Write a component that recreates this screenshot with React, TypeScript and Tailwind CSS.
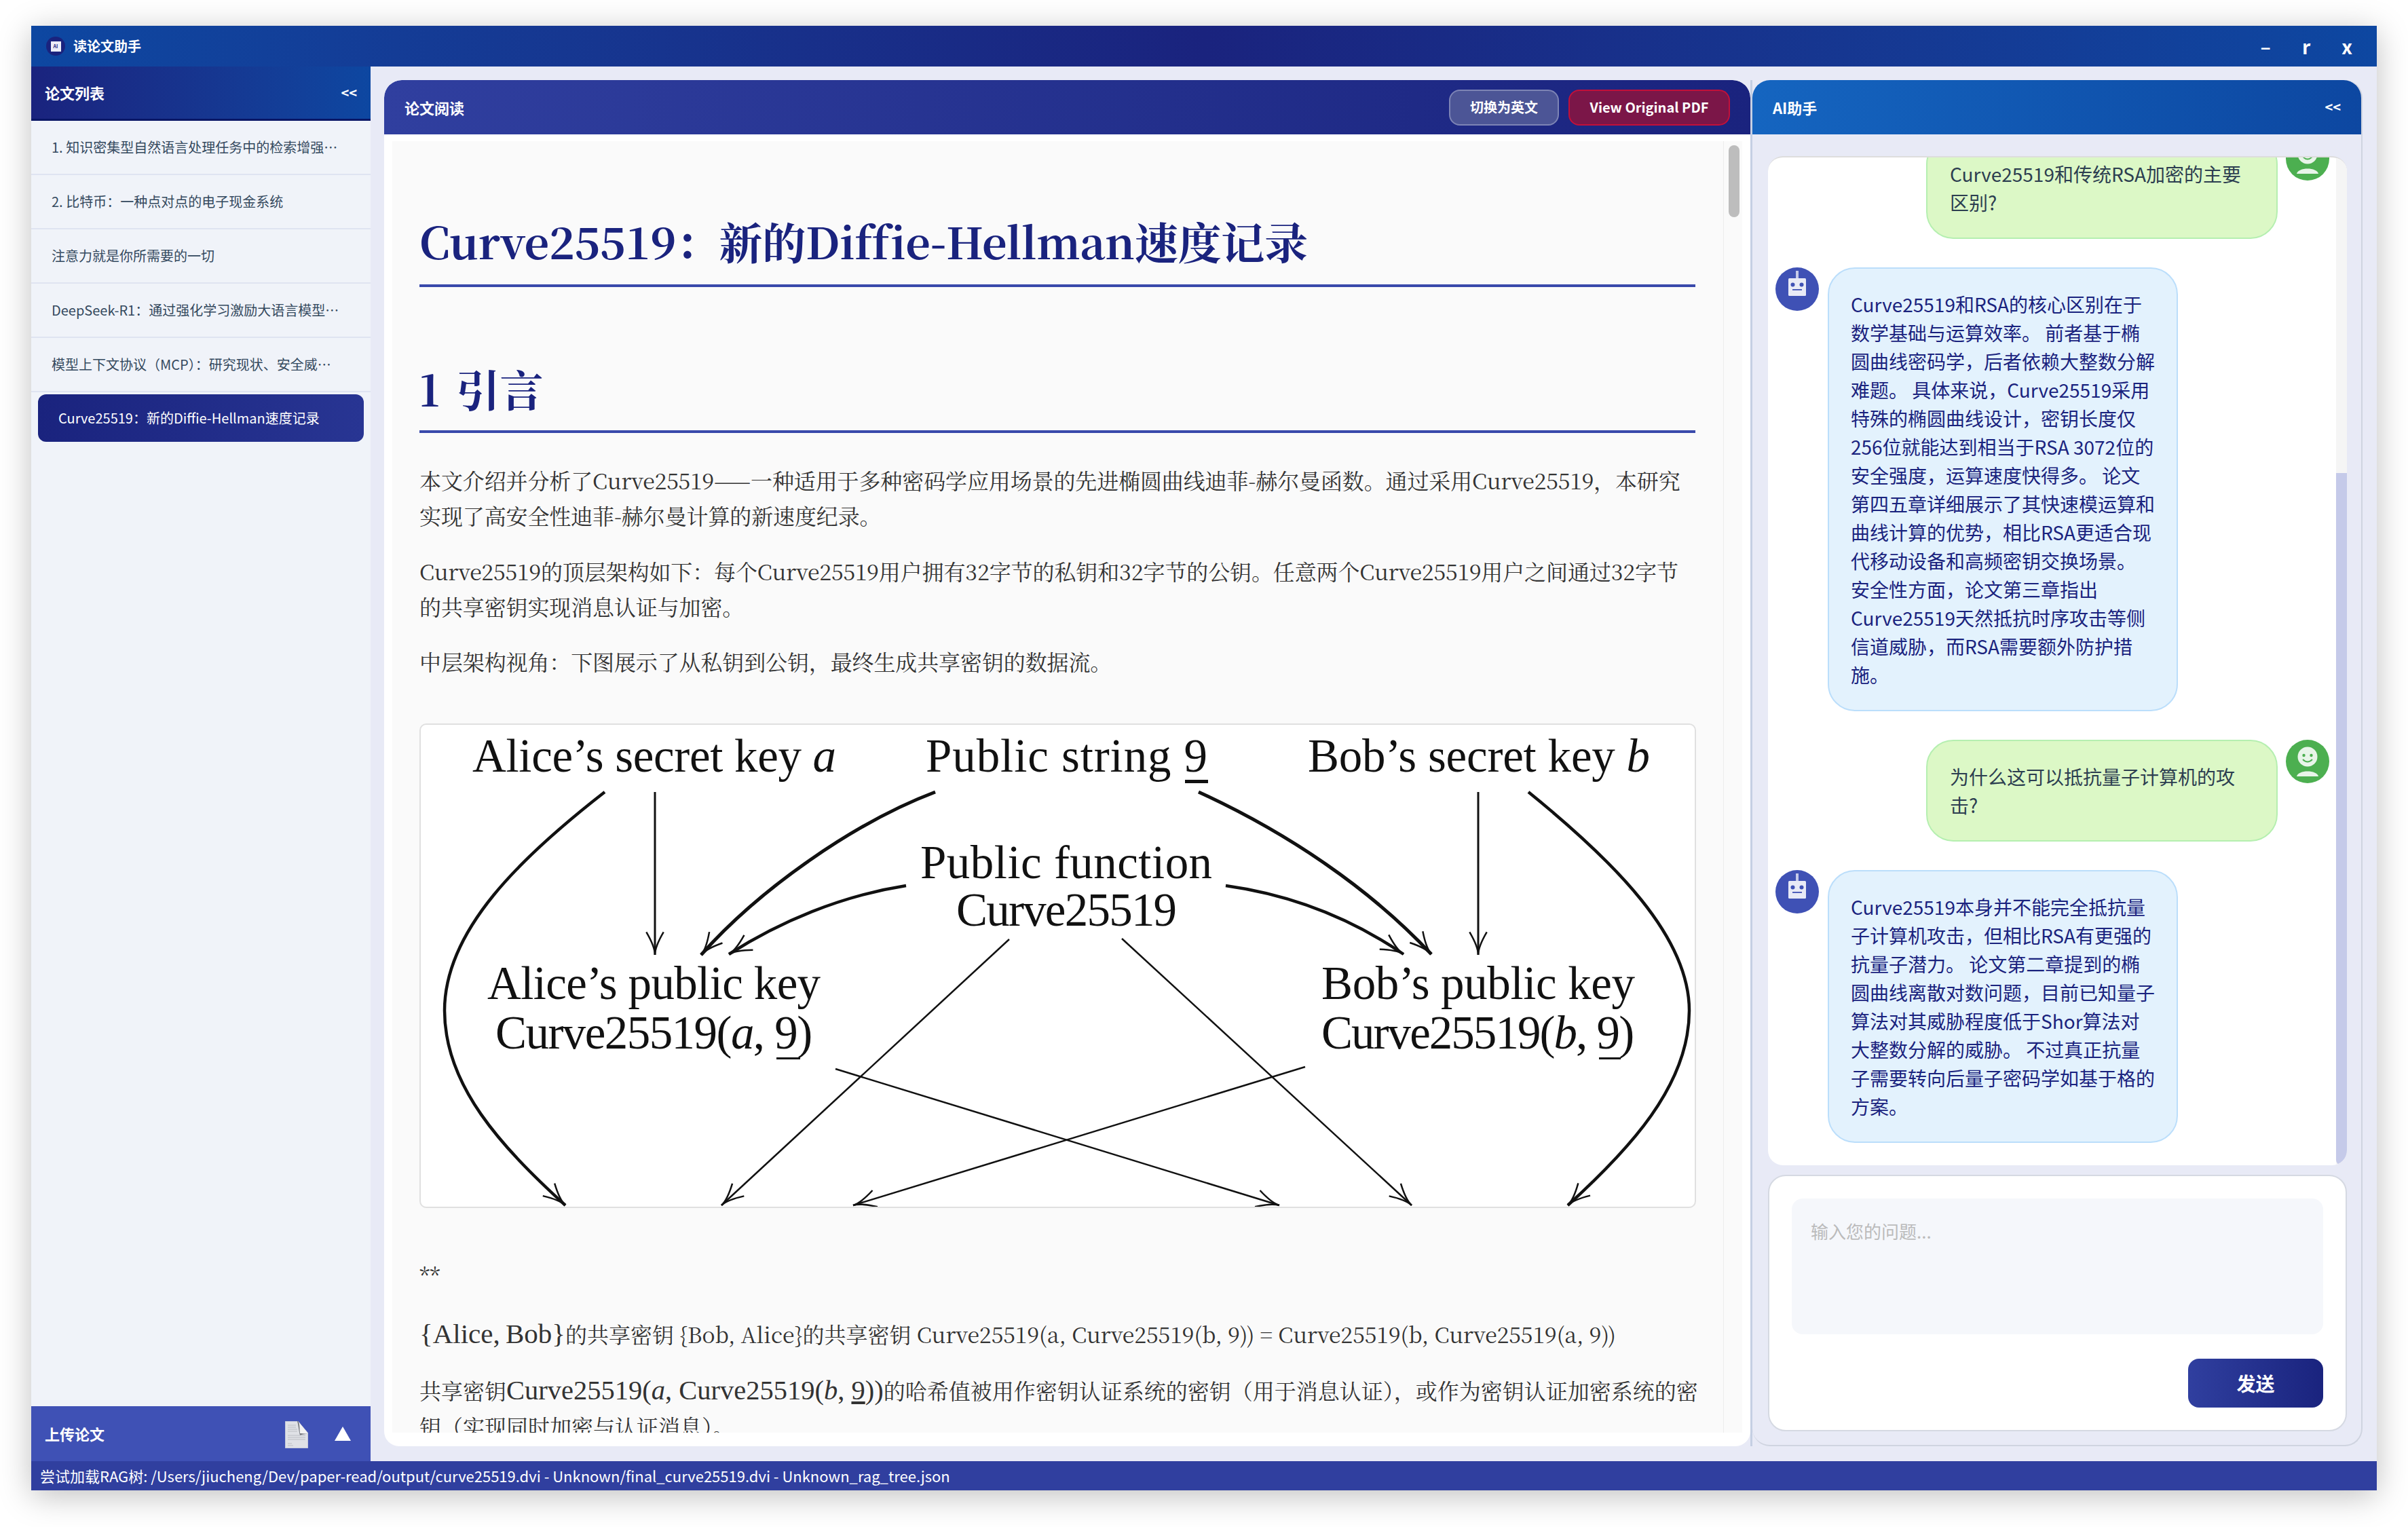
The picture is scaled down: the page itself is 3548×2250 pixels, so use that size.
import React from "react";

const papers = [
  "1. 知识密集型自然语言处理任务中的检索增强…",
  "2. 比特币：一种点对点的电子现金系统",
  "注意力就是你所需要的一切",
  "DeepSeek-R1：通过强化学习激励大语言模型…",
  "模型上下文协议（MCP）：研究现状、安全威…",
];

const answerOne = [
  "Curve25519和RSA的核心区别在于",
  "数学基础与运算效率。 前者基于椭",
  "圆曲线密码学，后者依赖大整数分解",
  "难题。 具体来说，Curve25519采用",
  "特殊的椭圆曲线设计，密钥长度仅",
  "256位就能达到相当于RSA 3072位的",
  "安全强度，运算速度快得多。 论文",
  "第四五章详细展示了其快速模运算和",
  "曲线计算的优势，相比RSA更适合现",
  "代移动设备和高频密钥交换场景。",
  "安全性方面，论文第三章指出",
  "Curve25519天然抵抗时序攻击等侧",
  "信道威胁，而RSA需要额外防护措",
  "施。",
];

const answerTwo = [
  "Curve25519本身并不能完全抵抗量",
  "子计算机攻击，但相比RSA有更强的",
  "抗量子潜力。 论文第二章提到的椭",
  "圆曲线离散对数问题，目前已知量子",
  "算法对其威胁程度低于Shor算法对",
  "大整数分解的威胁。 不过真正抗量",
  "子需要转向后量子密码学如基于格的",
  "方案。",
];

const sans = "font-['Noto_Sans_CJK_SC','Noto_Sans',sans-serif]";
const serif = "font-['Noto_Serif_CJK_SC','Liberation_Serif','Noto_Sans_CJK_SC',serif]";
const math = "font-['Liberation_Serif',serif]";

// open arrow head, tip at (x, y), coming from (fx, fy)
const head = (x: number, y: number, fx: number, fy: number, len = 36, spread = 0.36) => {
  const a = Math.atan2(fy - y, fx - x);
  const p1 = [x + len * Math.cos(a + spread), y + len * Math.sin(a + spread)];
  const p2 = [x + len * Math.cos(a - spread), y + len * Math.sin(a - spread)];
  return `M${p1[0]} ${p1[1]} Q${x + 12 * Math.cos(a)} ${y + 12 * Math.sin(a)} ${x} ${y} Q${x + 12 * Math.cos(a)} ${y + 12 * Math.sin(a)} ${p2[0]} ${p2[1]}`;
};

const Lines = ({ lines }: { lines: string[] }) => (
  <>
    {lines.map((l) => (
      <div key={l} className="whitespace-nowrap">
        {l}
      </div>
    ))}
  </>
);

const DiagramText = ({ x, y, w, children }: { x: number; y: number; w: number; children: React.ReactNode }) => (
  <text x={x} y={y} textLength={w} lengthAdjust="spacing" fontSize="69" fontFamily="'Liberation Serif', serif" fill="#111">
    {children}
  </text>
);

const Diagram = () => {
  const curves: [string, number, [number, number, number, number]][] = [
    ["M892 1167 C770 1262 656 1370 656 1489 C656 1600 740 1690 834 1776", 4.5, [834, 1776, 800, 1744]],
    ["M1379 1167 C1260 1212 1120 1310 1034 1407", 5, [1034, 1407, 1062, 1374]],
    ["M1336 1305 C1240 1320 1150 1358 1075 1406", 4.5, [1075, 1406, 1112, 1384]],
    ["M1767 1167 C1900 1228 2020 1310 2110 1406", 5, [2110, 1406, 2082, 1374]],
    ["M1807 1305 C1900 1318 1990 1352 2069 1406", 4.5, [2069, 1406, 2034, 1384]],
    ["M2253 1167 C2380 1270 2490 1380 2490 1489 C2490 1600 2400 1695 2311 1776", 4.5, [2311, 1776, 2344, 1744]],
    ["M966 1167 L966 1407", 3, [966, 1407, 966, 1370]],
    ["M2179 1167 L2179 1407", 3, [2179, 1407, 2179, 1370]],
    ["M1488 1384 L1064 1776", 2.5, [1064, 1776, 1092, 1750]],
    ["M1232 1575 L1886 1776", 2.5, [1886, 1776, 1850, 1765]],
    ["M1924 1572 L1258 1776", 2.5, [1258, 1776, 1294, 1765]],
    ["M1654 1383 L2081 1776", 2.5, [2081, 1776, 2053, 1750]],
  ];
  return (
    <svg viewBox="621 1068 1877 710" className="block h-full w-full">
      {curves.map(([d, sw, h]) => (
        <g key={d} fill="none" stroke="#111" strokeWidth={sw}>
          <path d={d} />
          <path d={head(h[0], h[1], h[2], h[3])} strokeWidth={2.5} />
        </g>
      ))}
      <DiagramText x={697} y={1137} w={536}>
        Alice’s secret key <tspan fontStyle="italic">a</tspan>
      </DiagramText>
      <DiagramText x={1365} y={1137} w={415}>
        Public string 9
      </DiagramText>
      <DiagramText x={1928} y={1137} w={504}>
        Bob’s secret key <tspan fontStyle="italic">b</tspan>
      </DiagramText>
      <DiagramText x={1357} y={1294} w={430}>
        Public function
      </DiagramText>
      <DiagramText x={1410} y={1364} w={325}>
        Curve25519
      </DiagramText>
      <DiagramText x={719} y={1472} w={491}>
        Alice’s public key
      </DiagramText>
      <DiagramText x={731} y={1545} w={467}>
        Curve25519(<tspan fontStyle="italic">a</tspan>, 9)
      </DiagramText>
      <DiagramText x={1948} y={1472} w={462}>
        Bob’s public key
      </DiagramText>
      <DiagramText x={1948} y={1545} w={461}>
        Curve25519(<tspan fontStyle="italic">b</tspan>, 9)
      </DiagramText>
      <g fill="#111">
        <rect x={1747} y={1149} width={34} height={5} />
        <rect x={1145} y={1558} width={35} height={3} />
        <rect x={2357} y={1558} width={32} height={3} />
      </g>
    </svg>
  );
};

const UserAvatar = () => (
  <svg viewBox="0 0 64 64" className="h-16 w-16 shrink-0">
    <circle cx="32" cy="32" r="32" fill="#4caf50" />
    <circle cx="32" cy="25" r="14.5" fill="#e8f5e9" />
    <circle cx="26.5" cy="23" r="2.2" fill="#4caf50" />
    <circle cx="37.5" cy="23" r="2.2" fill="#4caf50" />
    <path d="M25 29 Q32 36 39 29" fill="none" stroke="#4caf50" strokeWidth="1.8" />
    <path d="M16 54 C18 44 46 44 48 54 Z" fill="#e8f5e9" />
  </svg>
);

const BotAvatar = () => (
  <svg viewBox="0 0 64 64" className="h-16 w-16 shrink-0">
    <circle cx="32" cy="32" r="32" fill="#3f51b5" />
    <rect x="30" y="5" width="4" height="12" fill="#c5cae9" />
    <rect x="19" y="16" width="26" height="26" rx="1.5" fill="#e8eaf6" />
    <circle cx="25.5" cy="25.5" r="3" fill="#3f51b5" />
    <circle cx="38.5" cy="25.5" r="3" fill="#3f51b5" />
    <rect x="25" y="32" width="14" height="1.8" fill="#3f51b5" />
  </svg>
);

const FileIcon = () => (
  <svg viewBox="0 0 34 40" className="h-10 w-[34px]">
    <path d="M0 0 H19 L34 18 V40 H0 Z" fill="#dfe1e6" stroke="#aab1cf" />
    <path d="M19 0 C22 3 21 8 22 18 L34 18 Z" fill="#f2f2f2" />
    <path d="M18 0 C20 6 20 14 22 21 C26 19 30 19 34 19 L22 18 C21 10 22 4 19 0 Z" fill="#6d6f76" />
    <g stroke="#bcbec4" strokeWidth="1">
      <path d="M4 6 H16 M4 9 H16 M4 12 H18 M4 15 H18 M4 21 H30 M4 24 H30 M4 27 H30 M4 33 H10 M4 36 H12" />
    </g>
  </svg>
);

const UserBubble = ({ lines }: { lines: string[] }) => (
  <div className="flex justify-end gap-3 pr-[10px]">
    <div className="w-[518px] rounded-[40px] border-2 border-[#b5efb0] bg-[#dcf8c6] px-[33px] py-[31px] text-[#2c3e50]">
      <Lines lines={lines} />
    </div>
    <UserAvatar />
  </div>
);

const BotBubble = ({ lines }: { lines: string[] }) => (
  <div className="flex gap-[13px] pl-[11px]">
    <BotAvatar />
    <div className="w-[516px] rounded-[40px] border-2 border-[#bbdefb] bg-[#e3f2fd] px-[32px] py-[31px] text-[#1a237e]">
      <Lines lines={lines} />
    </div>
  </div>
);

export default function App() {
  return (
    <div className={`h-[2250px] w-[3548px] overflow-hidden bg-white pl-[46px] pt-[38px] ${sans}`}>
      <div className="flex h-[2158px] w-[3456px] flex-col bg-[#e8eaf6] shadow-[0_8px_44px_rgba(0,0,0,0.25)]">
        {/* Title bar */}
        <div className="flex h-[60px] shrink-0 items-center bg-gradient-to-r from-[#0d47a1] via-[#1a237e] to-[#0d47a1] pl-[22px] pr-[14px] text-white">
          <div className="flex h-7 w-7 items-center justify-center rounded-full bg-[#1a237e]">
            <div className="flex h-[15px] w-[15px] items-center justify-center bg-[#eceef8] text-[7px] font-bold text-[#1a237e]">
              AI
            </div>
          </div>
          <span className="ml-3 text-[20px] font-bold">读论文助手</span>
          <div className="ml-auto flex text-[28px] font-bold leading-none">
            <span className="w-[60px] text-center">–</span>
            <span className="w-[60px] text-center">r</span>
            <span className="w-[60px] text-center">x</span>
          </div>
        </div>

        <div className="flex min-h-0 flex-1">
          {/* Paper list */}
          <div className="flex w-[500px] shrink-0 flex-col bg-[#f0f3f9]">
            <div className="flex h-[80px] shrink-0 items-center justify-between border-b-[3px] border-[#0a1766] bg-gradient-to-r from-[#1a237e] to-[#0d47a1] pl-[20px] pr-[20px] font-bold text-white">
              <span className="text-[22px]">论文列表</span>
              <span className="text-[20px]">&lt;&lt;</span>
            </div>
            {papers.map((p) => (
              <div
                key={p}
                className="flex h-[80px] shrink-0 items-center whitespace-nowrap border-b-2 border-[#dfe4f1] pl-[30px] text-[20px] text-[#34495e]"
              >
                {p}
              </div>
            ))}
            <div className="mx-[10px] mt-[3px] flex h-[70px] shrink-0 items-center rounded-[12px] bg-gradient-to-r from-[#1a237e] to-[#283593] pl-[30px] text-[20px] text-white">
              Curve25519：新的Diffie-Hellman速度记录
            </div>
            <div className="mt-auto flex h-[81px] shrink-0 items-center bg-[#3f51b5] pl-[20px] text-white">
              <span className="text-[22px] font-bold">上传论文</span>
              <div className="ml-[266px] mt-[2px]">
                <FileIcon />
              </div>
              <div className="ml-[39px] h-0 w-0 border-x-[12px] border-b-[21px] border-x-transparent border-b-white" />
            </div>
          </div>

          {/* Reader + chat */}
          <div className="flex min-w-0 flex-1 pb-[22px] pl-[20px] pr-[21px] pt-[20px]">
            <div className="flex w-[2013px] shrink-0 flex-col overflow-hidden rounded-t-[26px] rounded-b-[22px] bg-white">
              <div className="flex h-[80px] shrink-0 items-center rounded-t-[26px] bg-gradient-to-r from-[#303f9f] to-[#1a237e] pl-[30px] pr-[30px] text-white">
                <span className="text-[22px] font-bold">论文阅读</span>
                <button className="ml-auto h-[53px] w-[162px] rounded-[16px] border-2 border-[#7d84b5] bg-[#4c5596] text-[20px] font-bold">
                  切换为英文
                </button>
                <button className="ml-[14px] h-[53px] w-[238px] rounded-[16px] border-2 border-[#c2103a] bg-[#7b1648] text-[20px] font-bold">
                  View Original PDF
                </button>
              </div>
              <div className="mx-[12px] mb-[20px] mt-[10px] flex min-h-0 flex-1 bg-[#fafafa]">
                <div className={`min-w-0 flex-1 overflow-hidden pl-[40px] pr-[41px] text-[32px] leading-[52px] tracking-[-0.12px] text-[#333] ${serif}`}>
                  <h1 className="mt-[101px] border-b-4 border-[#3949ab] pb-[20px] text-[64px] font-bold leading-[90px] tracking-[-0.3px] text-[#1a237e]">
                    Curve25519：新的Diffie-Hellman速度记录
                  </h1>
                  <h2 className="mt-[103px] border-b-4 border-[#3949ab] pb-[18px] text-[64px] font-bold leading-[90px] text-[#1a237e]">
                    1<span className="ml-[25px]">引言</span>
                  </h2>
                  <div className="mt-[43px]">
                    <Lines
                      lines={[
                        "本文介绍并分析了Curve25519——一种适用于多种密码学应用场景的先进椭圆曲线迪菲-赫尔曼函数。通过采用Curve25519，本研究",
                        "实现了高安全性迪菲-赫尔曼计算的新速度纪录。",
                      ]}
                    />
                  </div>
                  <div className="mt-[30px]">
                    <Lines
                      lines={[
                        "Curve25519的顶层架构如下：每个Curve25519用户拥有32字节的私钥和32字节的公钥。任意两个Curve25519用户之间通过32字节",
                        "的共享密钥实现消息认证与加密。",
                      ]}
                    />
                  </div>
                  <p className="mt-[29px]">中层架构视角：下图展示了从私钥到公钥，最终生成共享密钥的数据流。</p>
                  <div className="mt-[66px] h-[714px] w-[1881px] overflow-hidden rounded-[10px] border-2 border-[#e0e0e0] bg-white">
                    <Diagram />
                  </div>
                  <p className="mt-[72px]">**</p>
                  <p className="mt-[35px] whitespace-nowrap tracking-normal">
                    <span className={`text-[41px] ${math}`}>{"{Alice,\u2009Bob}"}</span>的共享密钥 {"{Bob, Alice}"}的共享密钥 Curve25519(a, Curve25519(b, 9)) = Curve25519(b, Curve25519(a, 9))
                  </p>
                  <div className="mt-[31px] tracking-normal">
                    <div className="whitespace-nowrap">
                      共享密钥<span className={`text-[40.5px] ${math}`}>Curve25519(<i>a</i>, Curve25519(<i>b</i>, <u>9</u>))</span>的哈希值被用作密钥认证系统的密钥（用于消息认证），或作为密钥认证加密系统的密
                    </div>
                    <div className="whitespace-nowrap">钥（实现同时加密与认证消息）。</div>
                  </div>
                </div>
                <div className="w-[28px] shrink-0 border-l border-[#ececec] pl-[7px] pt-[6px]">
                  <div className="h-[106px] w-4 rounded-full bg-[#bdbdbd]" />
                </div>
              </div>
            </div>

            <div className="w-[3px] shrink-0 bg-[#c5cfe3]" />

            <div className="flex w-[899px] shrink-0 flex-col rounded-t-[26px] rounded-b-[26px] border-b-2 border-r-2 border-[#cfd4e0]">
              <div className="flex h-[80px] shrink-0 items-center justify-between rounded-t-[26px] bg-gradient-to-r from-[#1565c0] to-[#0d47a1] pl-[30px] pr-[30px] font-bold text-white">
                <span className="text-[22px]">AI助手</span>
                <span className="text-[20px]">&lt;&lt;</span>
              </div>
              <div className="ml-[23px] mr-[21px] mt-[32px] flex h-[487px] min-h-0 flex-1 overflow-hidden rounded-[22px] border-t-2 border-[#dddddd] bg-white text-[28px] leading-[42px]">
                <div className="flex min-w-0 flex-1 flex-col justify-end gap-[42px] pb-[33px]">
                  <UserBubble lines={["Curve25519和传统RSA加密的主要", "区别?"]} />
                  <BotBubble lines={answerOne} />
                  <UserBubble lines={["为什么这可以抵抗量子计算机的攻", "击?"]} />
                  <BotBubble lines={answerTwo} />
                </div>
                <div className="flex w-4 shrink-0 flex-col justify-end bg-[#f5f5f5]">
                  <div className="h-[1020px] rounded-b-lg bg-[#c5cae9]" />
                </div>
              </div>
              <div className="mb-[20px] ml-[23px] mr-[21px] mt-[14px] flex h-[378px] shrink-0 flex-col rounded-[26px] border-2 border-[#d5d9e2] bg-white px-[33px] pb-[33px] pt-[33px]">
                <textarea
                  readOnly
                  placeholder="输入您的问题..."
                  className="h-[200px] w-full resize-none rounded-[16px] bg-[#f5f7fb] px-[28px] py-[28px] text-[26px] leading-[40px] outline-none placeholder:text-[#bbbbbb]"
                />
                <button className="ml-auto mt-[36px] h-[72px] w-[199px] rounded-[16px] bg-gradient-to-r from-[#303f9f] to-[#1a237e] text-[28px] font-bold text-white">
                  发送
                </button>
              </div>
            </div>
          </div>
        </div>

        {/* Status bar */}
        <div className="flex h-[43px] shrink-0 items-center bg-[#303f9f] pl-[13px] text-[22px] text-white">
          尝试加载RAG树: /Users/jiucheng/Dev/paper-read/output/curve25519.dvi - Unknown/final_curve25519.dvi - Unknown_rag_tree.json
        </div>
      </div>
    </div>
  );
}
